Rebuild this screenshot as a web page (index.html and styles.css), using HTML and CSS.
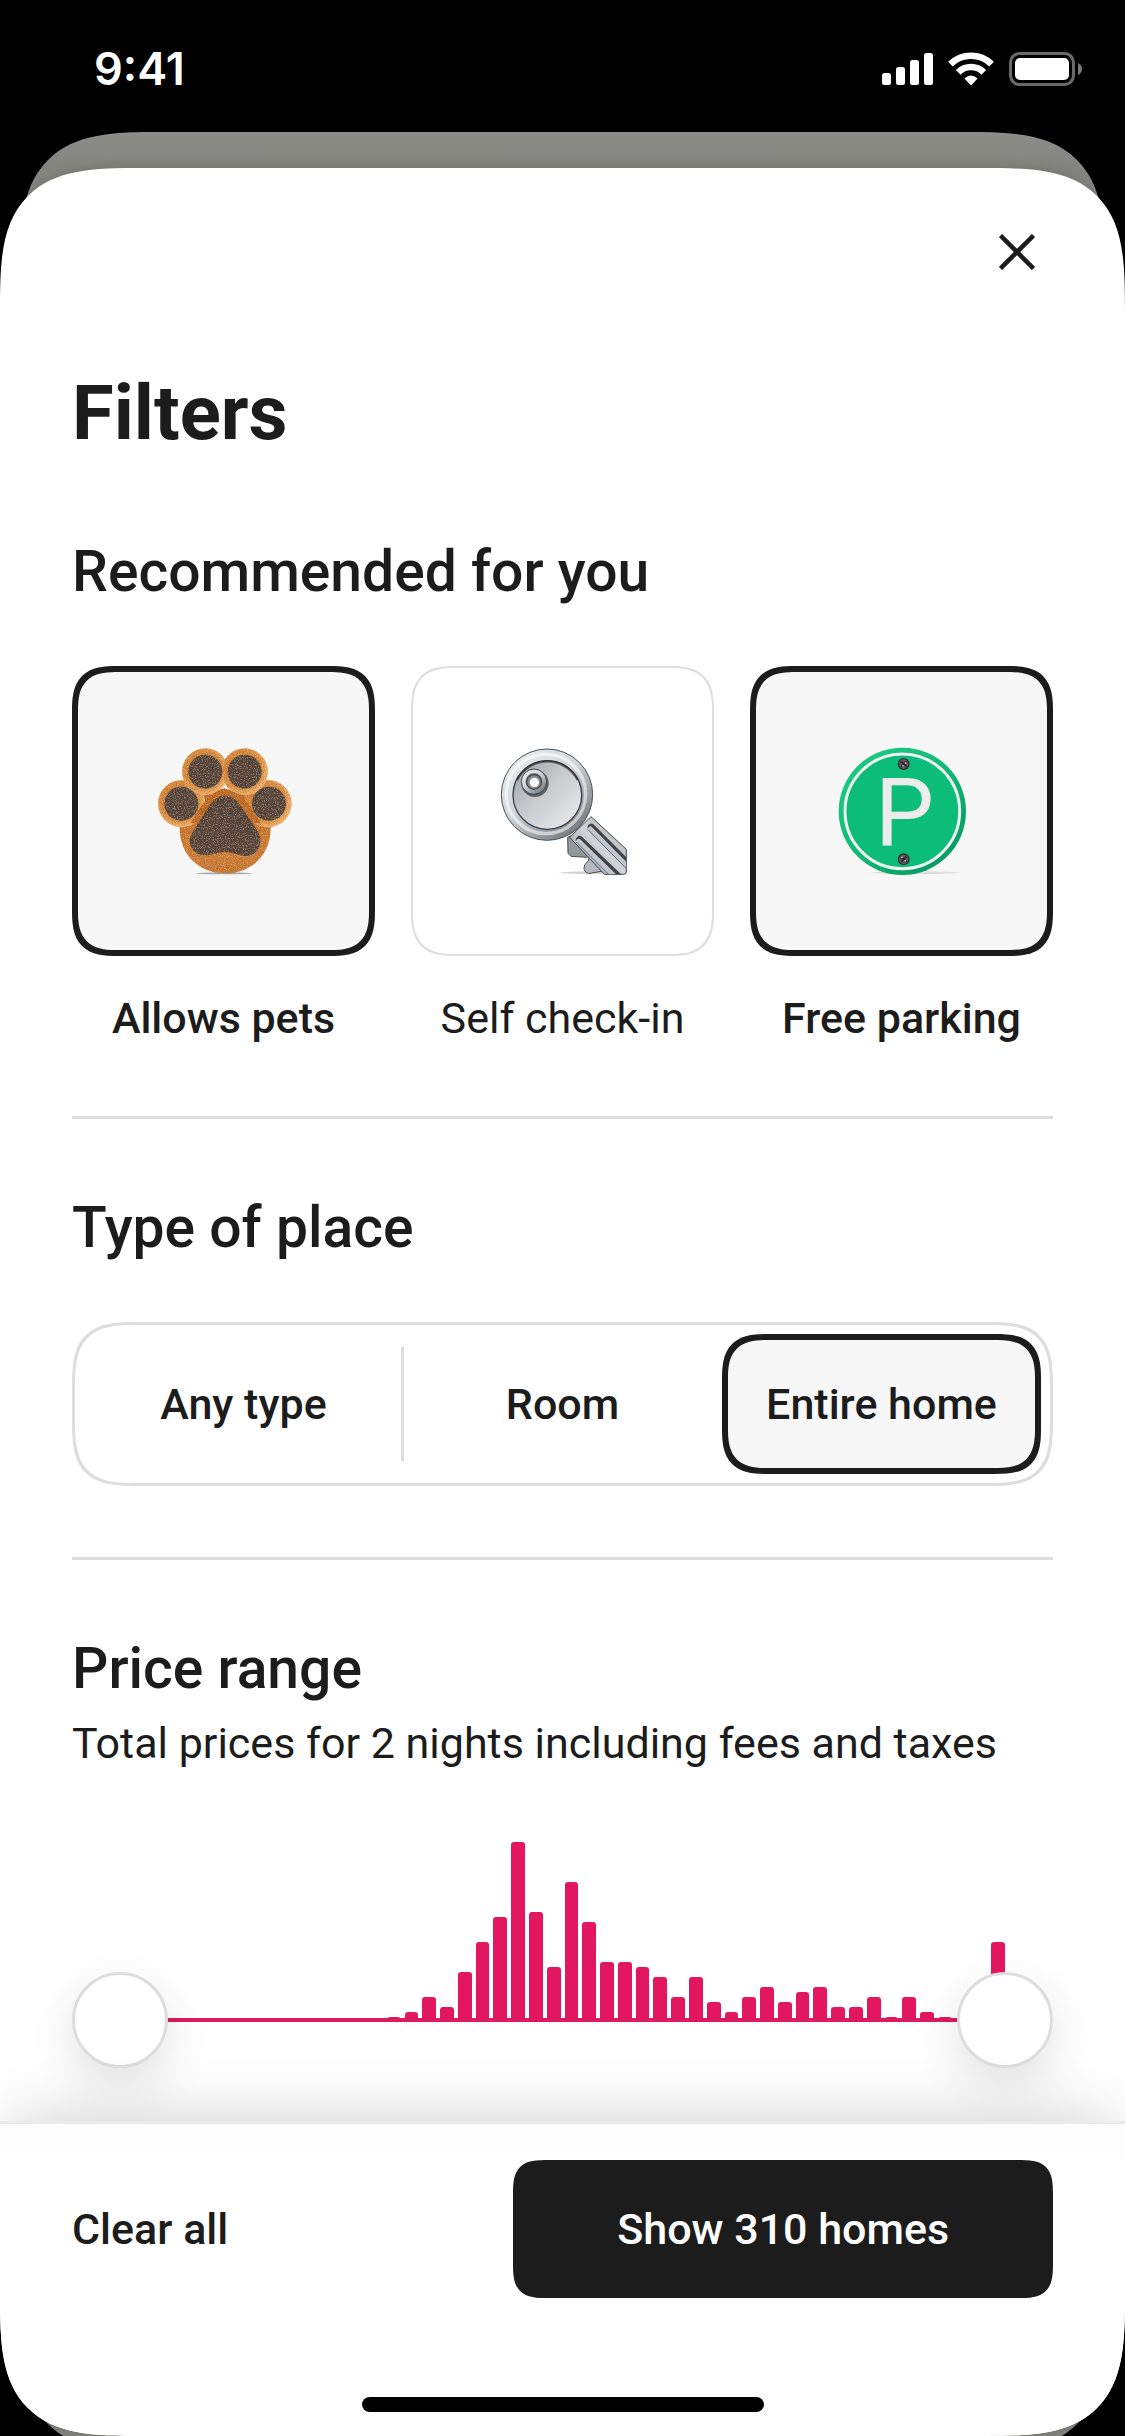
FILE: index.html
```html
<!DOCTYPE html>
<html lang="en">
<head>
<meta charset="utf-8">
<meta name="viewport" content="width=device-width, initial-scale=1">
<title>Filters</title>
<link rel="stylesheet" href="styles.css">
</head>
<body>
<div class="screen">
  <div class="backdrop"></div>

  <div class="status-bar">
    <time class="clock">9:41</time>
    <div class="status-icons">
      <svg width="51" height="34" viewBox="0 0 51 34" fill="#fff" role="img" aria-label="Signal">
        <rect x="0" y="21" width="9" height="12" rx="2.5"/>
        <rect x="14" y="15" width="9" height="18" rx="2.5"/>
        <rect x="28" y="8" width="9" height="25" rx="2.5"/>
        <rect x="42" y="1" width="9" height="32" rx="2.5"/>
      </svg>
      <svg width="46" height="34" viewBox="0 0 46 34" role="img" aria-label="Wi-Fi">
        <g fill="none" stroke="#fff" stroke-width="6.6">
          <path d="M2.4 12.2A29.5 29.5 0 0 1 43.6 12.2"/>
          <path d="M10.2 20.4A18 18 0 0 1 35.8 20.4"/>
        </g>
        <path fill="#fff" d="M16.4 26.4Q23 20.5 29.6 26.4L23 33.5Z"/>
      </svg>
      <svg width="74" height="34" viewBox="0 0 74 34" role="img" aria-label="Battery">
        <rect x="1.5" y="1.5" width="63" height="31" rx="9" fill="none" stroke="#6a6a6a" stroke-width="3"/>
        <rect x="6" y="6" width="54" height="22" rx="5" fill="#fff"/>
        <path d="M69 11Q73 13 73 17T69 23Z" fill="#7a7a7a"/>
      </svg>
    </div>
  </div>

  <main class="sheet">
    <header class="sheet-header">
      <button class="close" type="button" aria-label="Close">
        <svg width="36" height="36" viewBox="0 0 36 36" fill="none" stroke="#1c1c1c" stroke-width="4.5">
          <path d="M1.5 1.5L34.5 34.5M34.5 1.5L1.5 34.5"/>
        </svg>
      </button>
    </header>

    <form class="filters">
      <h1>Filters</h1>

      <section class="section section-first">
        <h2>Recommended for you</h2>
        <div class="cards">
          <label class="card">
            <input class="control" type="checkbox" checked>
            <span class="tile">
              <svg class="art" viewBox="274 262 432 432" aria-hidden="true">
                <defs>
                  <radialGradient id="fur" cx=".45" cy=".45" r=".56">
                    <stop offset="0" stop-color="#c06f20"/><stop offset=".72" stop-color="#dc8c3a"/><stop offset="1" stop-color="#f5b873"/>
                  </radialGradient>
                  <linearGradient id="palm" x1="0" y1="0" x2="0" y2="1">
                    <stop offset="0" stop-color="#c36a1c"/><stop offset=".75" stop-color="#d27f30"/><stop offset="1" stop-color="#c9782f"/>
                  </linearGradient>
                  <filter id="fuzz" x="-5%" y="-5%" width="110%" height="110%">
                    <feTurbulence type="fractalNoise" baseFrequency=".3" numOctaves="2" seed="4" result="n"/>
                    <feColorMatrix in="n" type="matrix" values="0 0 0 0 .1  0 0 0 0 .05  0 0 0 0 0  1.2 0 0 0 -.54" result="d"/>
                    <feColorMatrix in="n" type="matrix" values="0 0 0 0 1  0 0 0 0 .85  0 0 0 0 .7  0 .7 0 0 -.34" result="l"/>
                    <feComposite in="d" in2="SourceGraphic" operator="in" result="dark"/>
                    <feComposite in="l" in2="SourceGraphic" operator="in" result="light"/>
                    <feMerge><feMergeNode in="SourceGraphic"/><feMergeNode in="dark"/><feMergeNode in="light"/></feMerge>
                  </filter>
                  <filter id="soft" x="-20%" y="-200%" width="140%" height="500%"><feGaussianBlur stdDeviation="6 2"/></filter>
                </defs>
                <ellipse cx="490" cy="665" rx="84" ry="3" fill="#a0a6aa" filter="url(#soft)"/>
                <g filter="url(#fuzz)">
                  <path d="M490 420C400 420 357 470 357 530C357 610 415 665 494 665C572 665 630 610 630 530C630 470 580 420 490 420Z" fill="url(#palm)"/>
                  <circle cx="363" cy="456" r="71" fill="url(#fur)"/>
                  <circle cx="622" cy="456" r="71" fill="url(#fur)"/>
                  <circle cx="434" cy="360" r="70" fill="url(#fur)"/>
                  <circle cx="552" cy="360" r="70" fill="url(#fur)"/>
                  <path d="M490 410C440 425 410 480 390 515L600 515C575 470 550 425 490 410Z" fill="#c36a1c"/>
                  <g fill="#54433a">
                    <circle cx="362" cy="456" r="51"/>
                    <circle cx="625" cy="456" r="51"/>
                    <circle cx="434" cy="360" r="51"/>
                    <circle cx="552" cy="360" r="51"/>
                    <path d="M492 432C515 432 529 445 544 468L592 540C612 574 590 614 554 613C534 612 517 601 493 601C470 601 452 612 430 611C395 609 375 574 396 542L440 471C455 446 470 432 492 432Z"/>
                  </g>
                </g>
              </svg>
            </span>
            <span class="caption">Allows pets</span>
          </label>

          <label class="card">
            <input class="control" type="checkbox">
            <span class="tile">
              <svg class="art" viewBox="272 263 432 432" aria-hidden="true">
                <defs>
                  <linearGradient id="rim" x1="0" y1="0" x2=".8" y2="1">
                    <stop offset="0" stop-color="#f1f4f6"/><stop offset=".5" stop-color="#cfd4d8"/><stop offset="1" stop-color="#6d7276"/>
                  </linearGradient>
                  <linearGradient id="dish" x1="0" y1="0" x2="1" y2="1">
                    <stop offset="0" stop-color="#9a9fa2"/><stop offset=".45" stop-color="#c8cbce"/><stop offset="1" stop-color="#eceeef"/>
                  </linearGradient>
                  <linearGradient id="blade" x1="0" y1="1" x2="1" y2="0">
                    <stop offset="0" stop-color="#7d8185"/><stop offset=".5" stop-color="#d0d4d7"/><stop offset="1" stop-color="#a5abb0"/>
                  </linearGradient>
                  <clipPath id="blade-clip"><path d="M508 558L572 496L678 594V662Q678 669 670 669H612Z"/></clipPath>
                </defs>
                <ellipse cx="580" cy="664" rx="100" ry="4" fill="#d2d2d2" filter="url(#soft)"/>
                <path d="M502 558L503 606L512 615L560 618L590 590L530 545Z" fill="#94989b" stroke="#4a4d50" stroke-width="3"/>
                <path d="M566 620C566 634 551 634 551 650C551 664 566 670 578 664L604 660L580 624Z" fill="#b5b9bc" stroke="#4a4d50" stroke-width="3"/>
                <path d="M508 558L572 496L678 594V662Q678 669 670 669H612Z" fill="url(#blade)" stroke="#42474c" stroke-width="3" stroke-linejoin="round"/>
                <g fill="none" stroke-linecap="round" clip-path="url(#blade-clip)">
                  <path d="M573 528L690 646M538 565L660 682" stroke="#3e4348" stroke-width="22"/>
                  <path d="M570 533L690 654M535 570L656 688" stroke="#c0c6ca" stroke-width="15"/>
                  <path d="M563 535L690 664M528 572L640 684" stroke="#4e7196" stroke-width="3"/>
                </g>
                <circle cx="440" cy="430" r="137" fill="url(#rim)" stroke="#48545f" stroke-width="3"/>
                <circle cx="437" cy="428" r="119" fill="none" stroke="#fff" stroke-opacity=".55" stroke-width="10"/>
                <circle cx="441" cy="431" r="103" fill="url(#dish)" stroke="#33414f" stroke-width="4"/>
                <path d="M350 386A102 102 0 0 1 532 386" fill="none" stroke="#292c2f" stroke-width="7" stroke-opacity=".7"/>
                <circle cx="404" cy="396" r="41" fill="#303336" fill-opacity=".7"/>
                <circle cx="401" cy="391" r="38" fill="url(#rim)" stroke="#3c4650" stroke-width="3"/>
                <circle cx="401" cy="391" r="25" fill="#4a4e52"/>
                <circle cx="401" cy="392" r="20" fill="#84888c"/>
                <circle cx="402" cy="393" r="14" fill="#fff"/>
              </svg>
            </span>
            <span class="caption">Self check-in</span>
          </label>

          <label class="card">
            <input class="control" type="checkbox" checked>
            <span class="tile">
              <svg class="art" viewBox="284 263 432 432" aria-hidden="true">
                <defs>
                  <linearGradient id="sign" x1="0" y1="0" x2="1" y2="1">
                    <stop offset="0" stop-color="#1fcf84"/><stop offset=".5" stop-color="#10b874"/><stop offset="1" stop-color="#05925c"/>
                  </linearGradient>
                </defs>
                <ellipse cx="540" cy="664" rx="130" ry="4" fill="#dcdcdc" filter="url(#soft)"/>
                <circle cx="501" cy="480" r="191" fill="url(#sign)"/>
                <circle cx="501" cy="480" r="172" fill="#0bbd78" stroke="#f0f5f2" stroke-width="9"/>
                <text class="sign-letter" x="419" y="580">P</text>
                <g stroke="#332f33" stroke-width="4" fill="#5c565b">
                  <circle cx="505" cy="338" r="16"/>
                  <circle cx="505" cy="624" r="16"/>
                </g>
                <path d="M497 331L514 345M513 330L498 346M497 617L514 631M513 616L498 632" stroke="#2a272a" stroke-width="5"/>
                <g fill="#a9a2a7"><circle cx="503" cy="343" r="3"/><circle cx="511" cy="335" r="3"/><circle cx="500" cy="618" r="3"/><circle cx="510" cy="628" r="3"/></g>
              </svg>
            </span>
            <span class="caption">Free parking</span>
          </label>
        </div>
      </section>

      <section class="section">
        <h2 id="type-title">Type of place</h2>
        <div class="segments" role="radiogroup" aria-labelledby="type-title">
          <label class="segment"><input class="control" type="radio" name="place"><span>Any type</span></label>
          <label class="segment"><input class="control" type="radio" name="place"><span>Room</span></label>
          <label class="segment"><input class="control" type="radio" name="place" checked><span>Entire home</span></label>
        </div>
      </section>

      <section class="section">
        <h2 class="tight">Price range</h2>
        <p class="note">Total prices for 2 nights including fees and taxes</p>
        <div class="price">
          <div class="bars" id="bars" aria-hidden="true"></div>
          <div class="slider">
            <div class="track"></div>
            <input class="range" type="range" min="0" max="50" value="0" aria-label="Minimum price">
            <input class="range" type="range" min="0" max="50" value="50" aria-label="Maximum price">
          </div>
        </div>
      </section>
    </form>

    <footer class="footer">
      <div class="actions">
        <button class="clear" type="button">Clear all</button>
        <button class="show" type="button">Show 310 homes</button>
      </div>
      <div class="home-indicator"></div>
    </footer>
  </main>
</div>
<script src="bars.js"></script>
</body>
</html>
```
FILE: styles.css
```css
* {
  box-sizing: border-box;
}

body {
  margin: 0;
  background: #000;
  color: #1c1c1c;
  font-family: Roboto, "Liberation Sans", sans-serif;
  font-size: 43px;
  line-height: 54px;
}

button {
  border: 0;
  background: none;
  color: inherit;
  font: inherit;
  font-weight: 500;
  cursor: pointer;
}

h1,
h2,
p {
  margin: 0;
}

.screen {
  position: relative;
  display: flex;
  flex-direction: column;
  min-height: 100vh;
  overflow: hidden;
}

.backdrop {
  position: absolute;
  inset: 132px 20px -16px;
  border-radius: 96px;
  background: linear-gradient(#8c8c88, #84847f 36px, #84847f);
}

.status-bar {
  display: flex;
  justify-content: space-between;
  align-items: center;
  height: 132px;
  padding: 6px 42px 0 94px;
  color: #fff;
}

.clock {
  font-family: Inter, sans-serif;
  font-size: 45px;
  font-weight: 600;
}

.status-icons {
  display: flex;
  gap: 15px;
}

.sheet {
  position: relative;
  flex: 1;
  display: flex;
  flex-direction: column;
  margin-top: 36px;
  border-radius: 96px;
  background: #fff;
  overflow: hidden;
  box-shadow: 0 0 12px rgba(0, 0, 0, .15);
}

.sheet-header {
  display: flex;
  justify-content: flex-end;
  padding: 42px 66px 0;
}

.close {
  display: grid;
  place-items: center;
  width: 84px;
  height: 84px;
  padding: 0;
}

.filters {
  flex: 1;
  padding: 71px 72px 52px;
}

h1 {
  font-size: 76px;
  font-weight: 700;
  line-height: 96px;
}

h2 {
  margin-bottom: 61px;
  font-size: 57px;
  font-weight: 500;
  line-height: 66px;
}

h2.tight {
  margin-bottom: 14px;
}

.section {
  padding: 76px 0 71px;
}

.section + .section {
  border-top: 3px solid #ddd;
}

.section:last-child {
  padding-bottom: 0;
}

.section-first {
  padding-top: 78px;
}

.control {
  position: absolute;
  width: 1px;
  height: 1px;
  margin: 0;
  opacity: 0;
}

.cards {
  display: grid;
  grid-template-columns: repeat(3, 1fr);
  gap: 36px;
}

.card {
  position: relative;
  display: flex;
  flex-direction: column;
  gap: 35px;
  text-align: center;
}

.tile {
  display: grid;
  place-items: center;
  height: 290px;
  border: 2px solid #ddd;
  border-radius: 36px;
}

.art {
  width: 144px;
  height: 144px;
}

.sign-letter {
  font-size: 281px;
  fill: #ececec;
}

.control:checked + .tile {
  border: 6px solid #1c1c1c;
  background: #f7f7f7;
}

.control:checked ~ .caption {
  font-weight: 500;
}

.segments {
  display: grid;
  grid-template-columns: repeat(3, 1fr);
  padding: 9px;
  border: 3px solid #ddd;
  border-radius: 48px;
}

.segment {
  position: relative;
  font-weight: 500;
  text-align: center;
}

.segment span {
  display: grid;
  place-items: center;
  height: 140px;
}

.segment:first-child::after {
  content: "";
  position: absolute;
  inset: 13px -1px 13px auto;
  width: 3px;
  background: #ddd;
}

.segment .control:checked + span {
  border: 6px solid #1c1c1c;
  border-radius: 36px;
  background: #f7f7f7;
}

.price {
  margin-top: 72px;
}

.bars {
  display: flex;
  align-items: flex-end;
  gap: 4px;
  height: 180px;
  padding: 0 48px;
}

.bar {
  flex: 1;
  border-radius: 3px 3px 0 0;
  background: #e3175f;
}

.slider {
  display: grid;
  align-items: center;
  height: 96px;
  margin-top: -50px;
}

.slider > * {
  grid-area: 1 / 1;
}

.track {
  height: 4px;
  margin: 0 48px;
  background: #dd1a5d;
}

.range {
  appearance: none;
  z-index: 1;
  width: 100%;
  height: 96px;
  margin: 0;
  background: none;
  pointer-events: none;
}

.range::-webkit-slider-thumb {
  appearance: none;
  width: 96px;
  height: 96px;
  border: 3px solid #ddd;
  border-radius: 50%;
  background: #fff;
  box-shadow: 0 18px 48px rgba(0, 0, 0, .12);
  pointer-events: auto;
}

.footer {
  position: relative;
  z-index: 2;
  display: flex;
  flex-direction: column;
  gap: 99px;
  padding: 36px 72px 24px;
  border-top: 3px solid #ebebeb;
  background: linear-gradient(#fcfcfc, #fff 60px);
  box-shadow: 0 -12px 60px -12px rgba(0, 0, 0, .2);
}

.actions {
  display: flex;
  justify-content: space-between;
  align-items: center;
}

.clear {
  padding: 0;
}

.show {
  width: 55%;
  height: 138px;
  border-radius: 24px;
  background: #1c1c1c;
  color: #fff;
}

.home-indicator {
  align-self: center;
  width: 402px;
  height: 15px;
  border-radius: 8px;
  background: #000;
}

@supports (corner-shape: superellipse(1.66)) {
  .backdrop,
  .sheet,
  .segments,
  .show {
    corner-shape: superellipse(1.66);
  }

  .tile,
  .segment span {
    corner-shape: superellipse(1.5);
  }

  .backdrop,
  .sheet {
    border-radius: 142px;
  }

  .tile,
  .segment .control:checked + span {
    border-radius: 46px;
  }

  .segments {
    border-radius: 68px;
  }

  .show {
    border-radius: 36px;
  }
}
```
FILE: bars.js
```js
// Homes per price bucket, lowest price first.
const counts = [
  0, 0, 0, 0, 0, 0, 0, 0, 0, 0, 0, 0, 0, 0, 0,
  1, 2, 5, 3, 10, 16, 21, 36, 22, 11, 28, 20, 12, 12, 11, 9, 5, 9, 4, 2,
  5, 7, 4, 6, 7, 3, 3, 5, 1, 5, 2, 1, 0, 0, 16
];
const bars = document.getElementById("bars");
const tallest = Math.max(...counts);

counts.forEach((count) => {
  const bar = document.createElement("div");
  bar.className = "bar";
  bar.style.height = `${(count / tallest) * 100}%`;
  bars.append(bar);
});
```
